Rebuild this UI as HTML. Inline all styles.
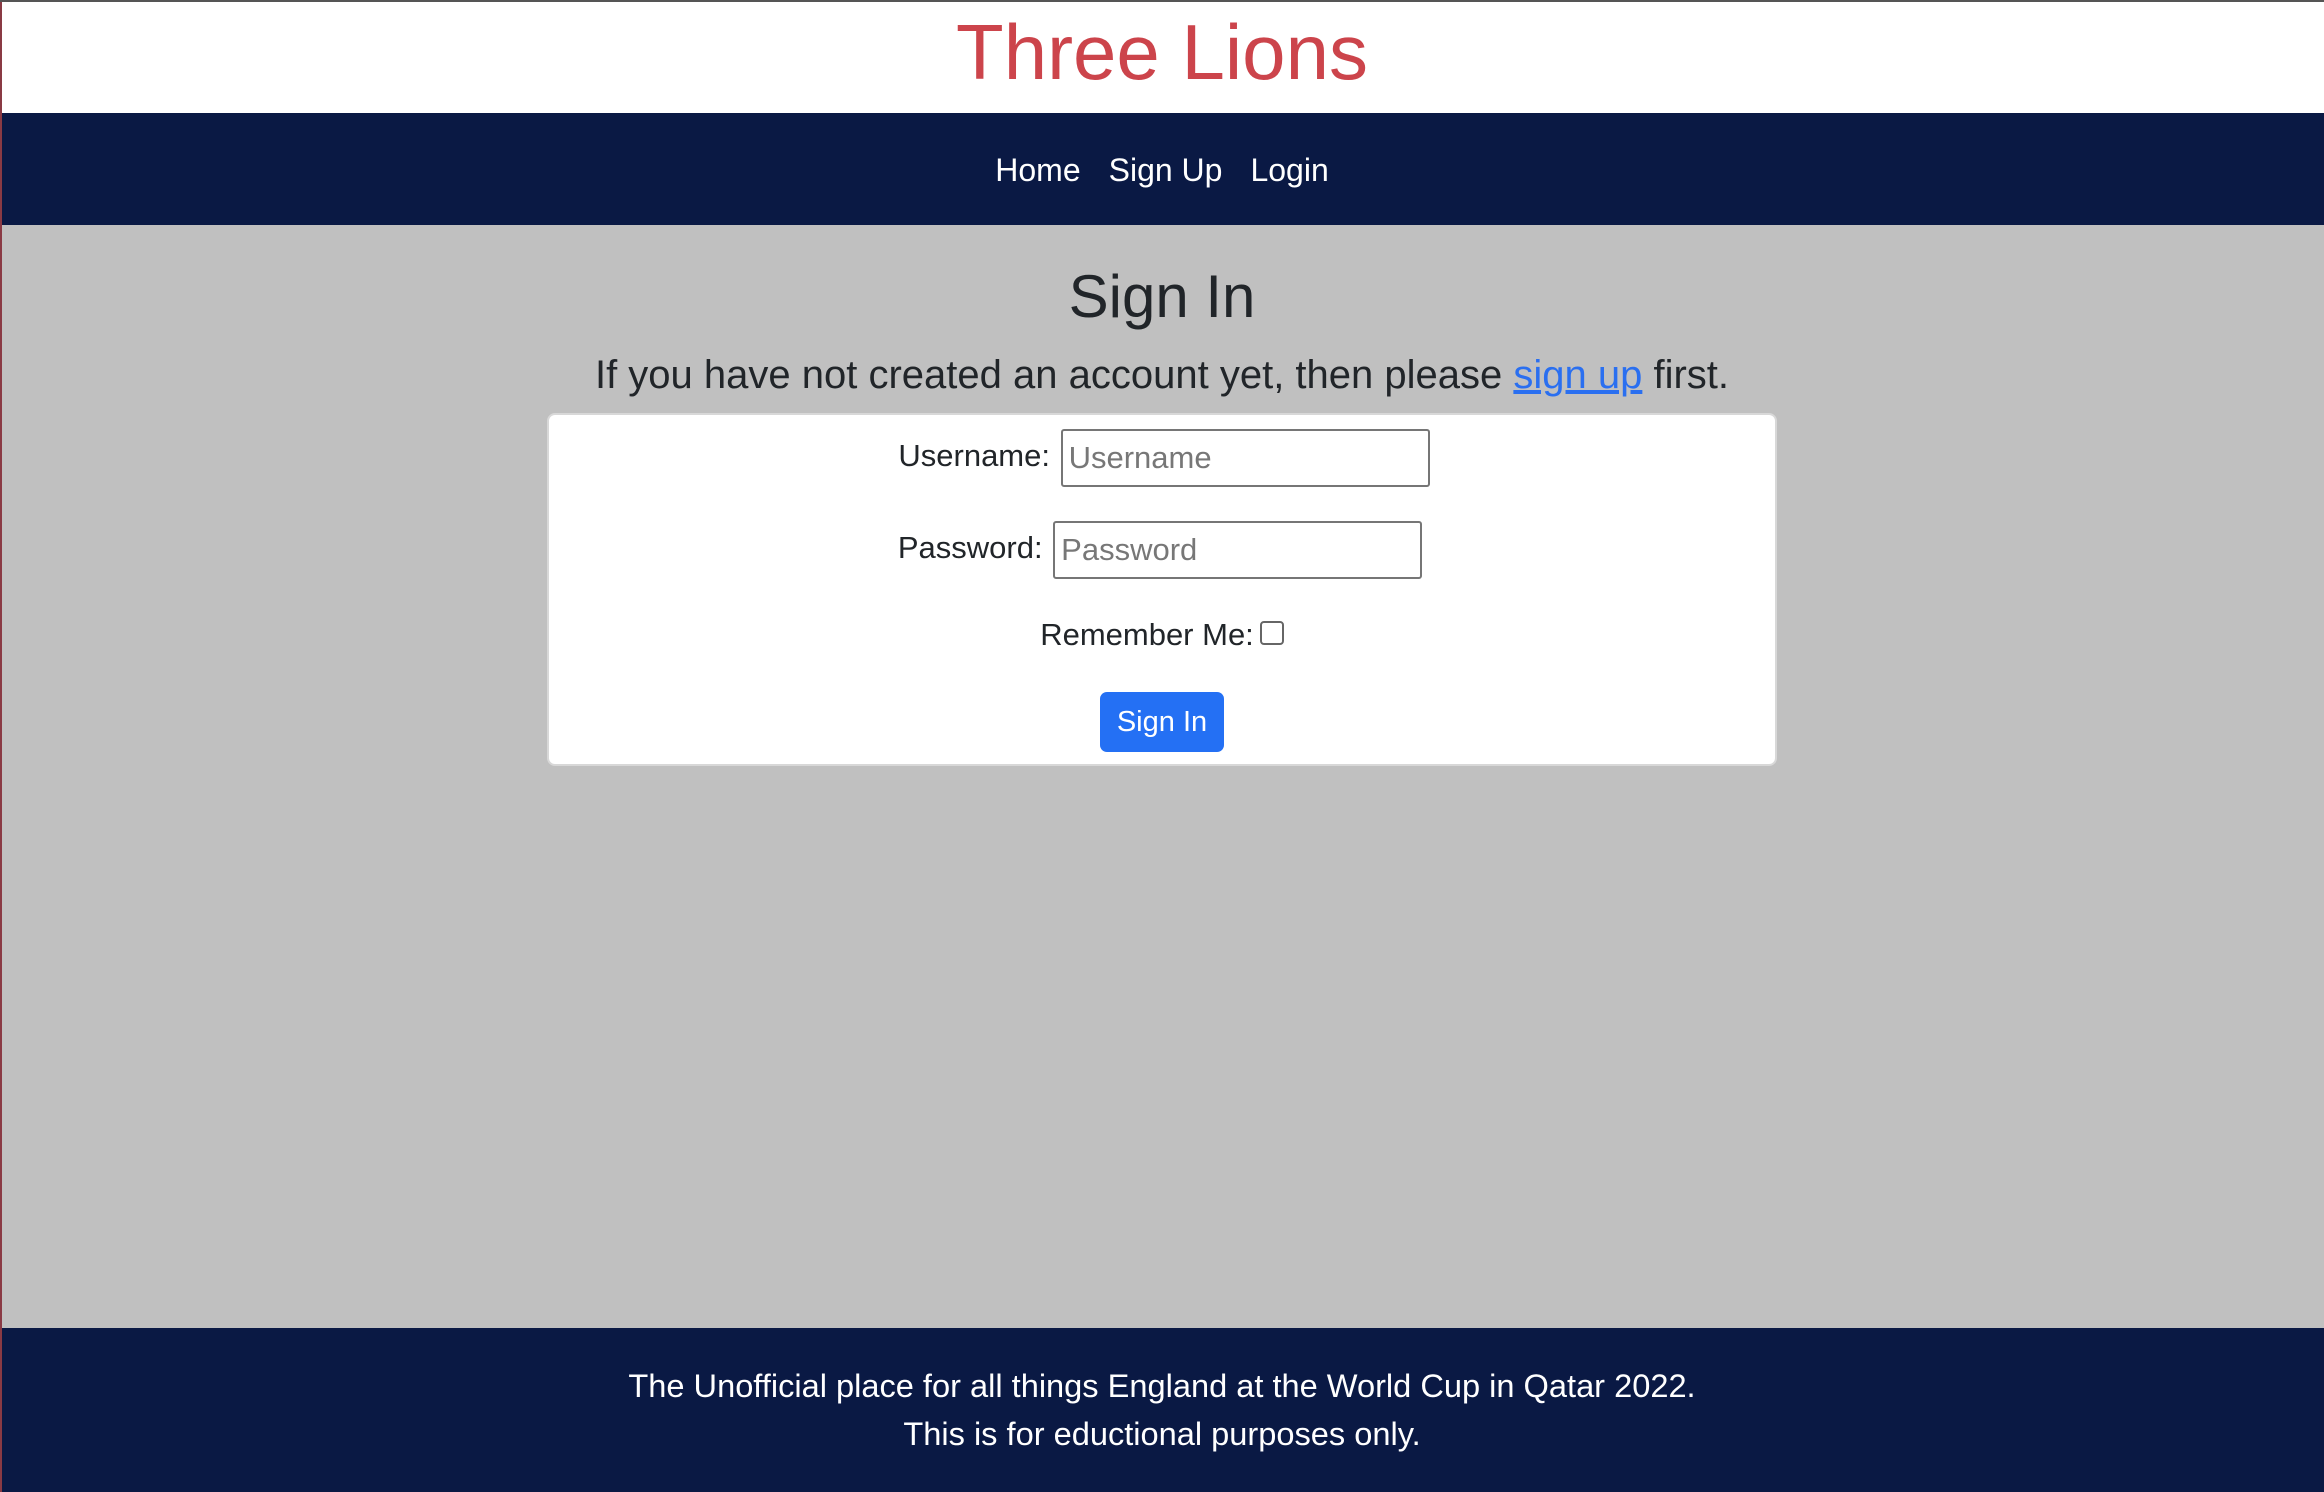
<!DOCTYPE html>
<html><head><meta charset="utf-8">
<style>
*{margin:0;padding:0;box-sizing:border-box}
html,body{width:2324px;height:1492px;overflow:hidden}
body{font-family:"Liberation Sans",Arial,sans-serif;background:#c0c0c0;position:relative}
.edge{position:absolute;left:0;top:0;width:2px;height:1492px;background:#8a3a44;z-index:5}
.topb{position:absolute;left:0;top:0;width:2324px;height:2px;background:#555;z-index:5}
.hdr{position:absolute;left:0;top:0;width:2324px;height:113px;background:#fff;text-align:center}
.hdr h1{font-weight:400;color:#cc444b;font-size:78px;line-height:104px}
.nav{position:absolute;left:0;top:113px;width:2324px;height:112px;background:#0a1944;text-align:center;color:#fff;font-size:32px;line-height:114px}
.nav span{margin:0 14px}
.t{position:absolute;left:0;width:2324px;text-align:center;color:#212529}
h2{font-weight:400;font-size:60px}
.sub{font-size:40px}
.sub a{color:#2a6ff0;text-decoration:underline}
.card{position:absolute;left:547px;top:413px;width:1230px;height:353px;background:#fff;border:2px solid #d8d8d8;border-radius:8px}
.row{position:absolute;left:0;width:100%;text-align:center;font-size:31px;color:#212529}
.inp{display:inline-block;vertical-align:middle;width:369px;height:58px;border:2px solid #767676;border-radius:3px;text-align:left;padding-left:6px;color:#777;line-height:54px;margin-left:2px}
.cb{display:inline-block;width:24px;height:24px;border:2px solid #666;border-radius:4px;vertical-align:middle;margin-left:6px;position:relative;top:-4px}
.btn{display:inline-block;width:124px;height:60px;background:#2470f4;color:#fff;border-radius:7px;line-height:60px;font-size:29px}
.ft{position:absolute;left:0;top:1328px;width:2324px;height:164px;background:#0a1944;color:#fff;text-align:center;font-size:32.6px}
</style></head><body>
<div class="edge"></div><div class="topb"></div>
<div class="hdr"><h1>Three Lions</h1></div>
<div class="nav"><span>Home</span><span>Sign Up</span><span>Login</span></div>
<div class="t" style="top:262px"><h2>Sign In</h2></div>
<div class="t sub" style="top:353px">If you have not created an account yet, then please <a>sign up</a> first.</div>
<div class="card">
<div class="row" style="top:14px;left:2px">Username: <span class="inp">Username</span></div>
<div class="row" style="top:106px;left:-2px">Password: <span class="inp">Password</span></div>
<div class="row" style="top:202px">Remember Me:<span class="cb"></span></div>
<div class="row" style="top:277px"><span class="btn">Sign In</span></div>
</div>
<div class="ft"><div style="position:absolute;top:39px;width:100%">The Unofficial place for all things England at the World Cup in Qatar 2022.</div><div style="position:absolute;top:87px;width:100%">This is for eductional purposes only.</div></div>
</body></html>
